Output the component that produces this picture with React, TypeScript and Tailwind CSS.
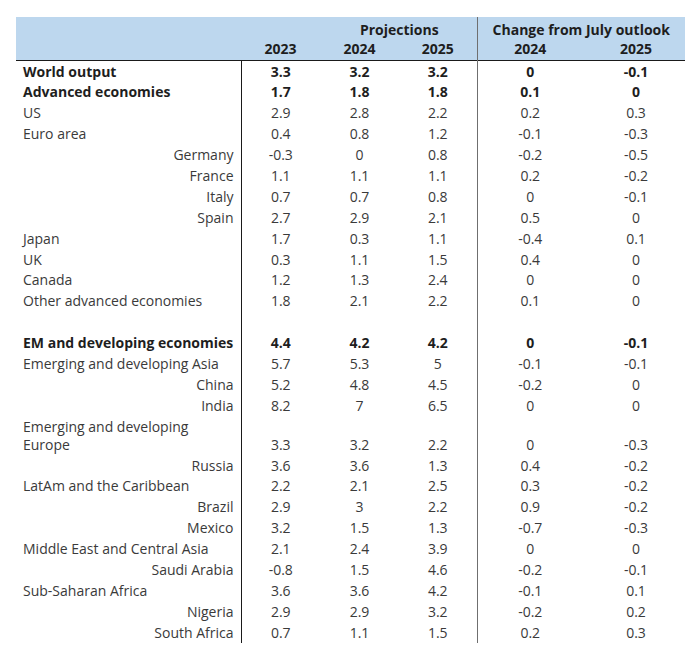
type Row = {
  label: string
  v: (string | number)[]
  bold?: boolean
  indent?: boolean
  wrap?: string
  blank?: boolean
}

const rows: Row[] = [
  { label: 'World output', v: ['3.3', '3.2', '3.2', '0', '-0.1'], bold: true },
  { label: 'Advanced economies', v: ['1.7', '1.8', '1.8', '0.1', '0'], bold: true },
  { label: 'US', v: ['2.9', '2.8', '2.2', '0.2', '0.3'] },
  { label: 'Euro area', v: ['0.4', '0.8', '1.2', '-0.1', '-0.3'] },
  { label: 'Germany', v: ['-0.3', '0', '0.8', '-0.2', '-0.5'], indent: true },
  { label: 'France', v: ['1.1', '1.1', '1.1', '0.2', '-0.2'], indent: true },
  { label: 'Italy', v: ['0.7', '0.7', '0.8', '0', '-0.1'], indent: true },
  { label: 'Spain', v: ['2.7', '2.9', '2.1', '0.5', '0'], indent: true },
  { label: 'Japan', v: ['1.7', '0.3', '1.1', '-0.4', '0.1'] },
  { label: 'UK', v: ['0.3', '1.1', '1.5', '0.4', '0'] },
  { label: 'Canada', v: ['1.2', '1.3', '2.4', '0', '0'] },
  { label: 'Other advanced economies', v: ['1.8', '2.1', '2.2', '0.1', '0'] },
  { label: '', v: ['', '', '', '', ''], blank: true },
  { label: 'EM and developing economies', v: ['4.4', '4.2', '4.2', '0', '-0.1'], bold: true },
  { label: 'Emerging and developing Asia', v: ['5.7', '5.3', '5', '-0.1', '-0.1'] },
  { label: 'China', v: ['5.2', '4.8', '4.5', '-0.2', '0'], indent: true },
  { label: 'India', v: ['8.2', '7', '6.5', '0', '0'], indent: true },
  { label: 'Europe', wrap: 'Emerging and developing', v: ['3.3', '3.2', '2.2', '0', '-0.3'] },
  { label: 'Russia', v: ['3.6', '3.6', '1.3', '0.4', '-0.2'], indent: true },
  { label: 'LatAm and the Caribbean', v: ['2.2', '2.1', '2.5', '0.3', '-0.2'] },
  { label: 'Brazil', v: ['2.9', '3', '2.2', '0.9', '-0.2'], indent: true },
  { label: 'Mexico', v: ['3.2', '1.5', '1.3', '-0.7', '-0.3'], indent: true },
  { label: 'Middle East and Central Asia', v: ['2.1', '2.4', '3.9', '0', '0'] },
  { label: 'Saudi Arabia', v: ['-0.8', '1.5', '4.6', '-0.2', '-0.1'], indent: true },
  { label: 'Sub-Saharan Africa', v: ['3.6', '3.6', '4.2', '-0.1', '0.1'] },
  { label: 'Nigeria', v: ['2.9', '2.9', '3.2', '-0.2', '0.2'], indent: true },
  { label: 'South Africa', v: ['0.7', '1.1', '1.5', '0.2', '0.3'], indent: true },
]

export default function App() {
  return (
    <div className="min-h-[656px] w-[697px] bg-white pl-[16px] pt-[17px] font-['Open_Sans',sans-serif] text-[14px] text-[#3a3a3a]">
      <table className="w-[669px] table-fixed border-collapse">
        <colgroup>
          <col className="w-[225px]" />
          <col className="w-[79px]" />
          <col className="w-[79px]" />
          <col className="w-[78px]" />
          <col className="w-[106px]" />
          <col className="w-[102px]" />
        </colgroup>
        <thead className="bg-[#bdd7ee] font-bold text-[#1e1e1e]">
          <tr className="h-[21px] leading-[17px]">
            <th />
            <th />
            <th colSpan={2} className="border-r-[1.5px] border-[#6f6f6f] pt-[3px] pl-[2px] text-center">
              Projections
            </th>
            <th colSpan={2} className="pt-[3px] text-center">
              Change from July outlook
            </th>
          </tr>
          <tr className="h-[22px] border-b-[1.5px] border-[#1a1a1a] leading-[17px]">
            <th />
            <th className="pb-[1px] text-center">2023</th>
            <th className="pb-[1px] text-center">2024</th>
            <th className="border-r-[1.5px] border-[#6f6f6f] pb-[1px] text-center">2025</th>
            <th className="pb-[1px] text-center">2024</th>
            <th className="pb-[1px] pl-[4px] text-center">2025</th>
          </tr>
        </thead>
        <tbody>
          {rows.map((r, i) => (
            <tr key={i} className={r.bold ? 'font-bold text-[#1e1e1e]' : ''}>
              <td
                className={`whitespace-nowrap border-r border-[#1a1a1a] pt-[2px] pb-[0.9px] align-bottom leading-[18px] ${
                  r.indent ? 'pr-[7px] text-right' : 'pl-[7px] text-left'
                }`}
              >
                {r.blank ? '\u00a0' : r.wrap ? (
                  <>
                    {r.wrap}
                    <br />
                    {r.label}
                  </>
                ) : (
                  r.label
                )}
              </td>
              {r.v.map((x, j) => (
                <td
                  key={j}
                  className={`pt-[2px] pb-[0.9px] text-center align-bottom leading-[18px] ${
                    j === 2 ? 'border-r-[1.5px] border-[#6f6f6f]' : ''
                  } ${j === 4 ? 'pl-[4px]' : ''}`}
                >
                  {x}
                </td>
              ))}
            </tr>
          ))}
        </tbody>
      </table>
    </div>
  )
}
